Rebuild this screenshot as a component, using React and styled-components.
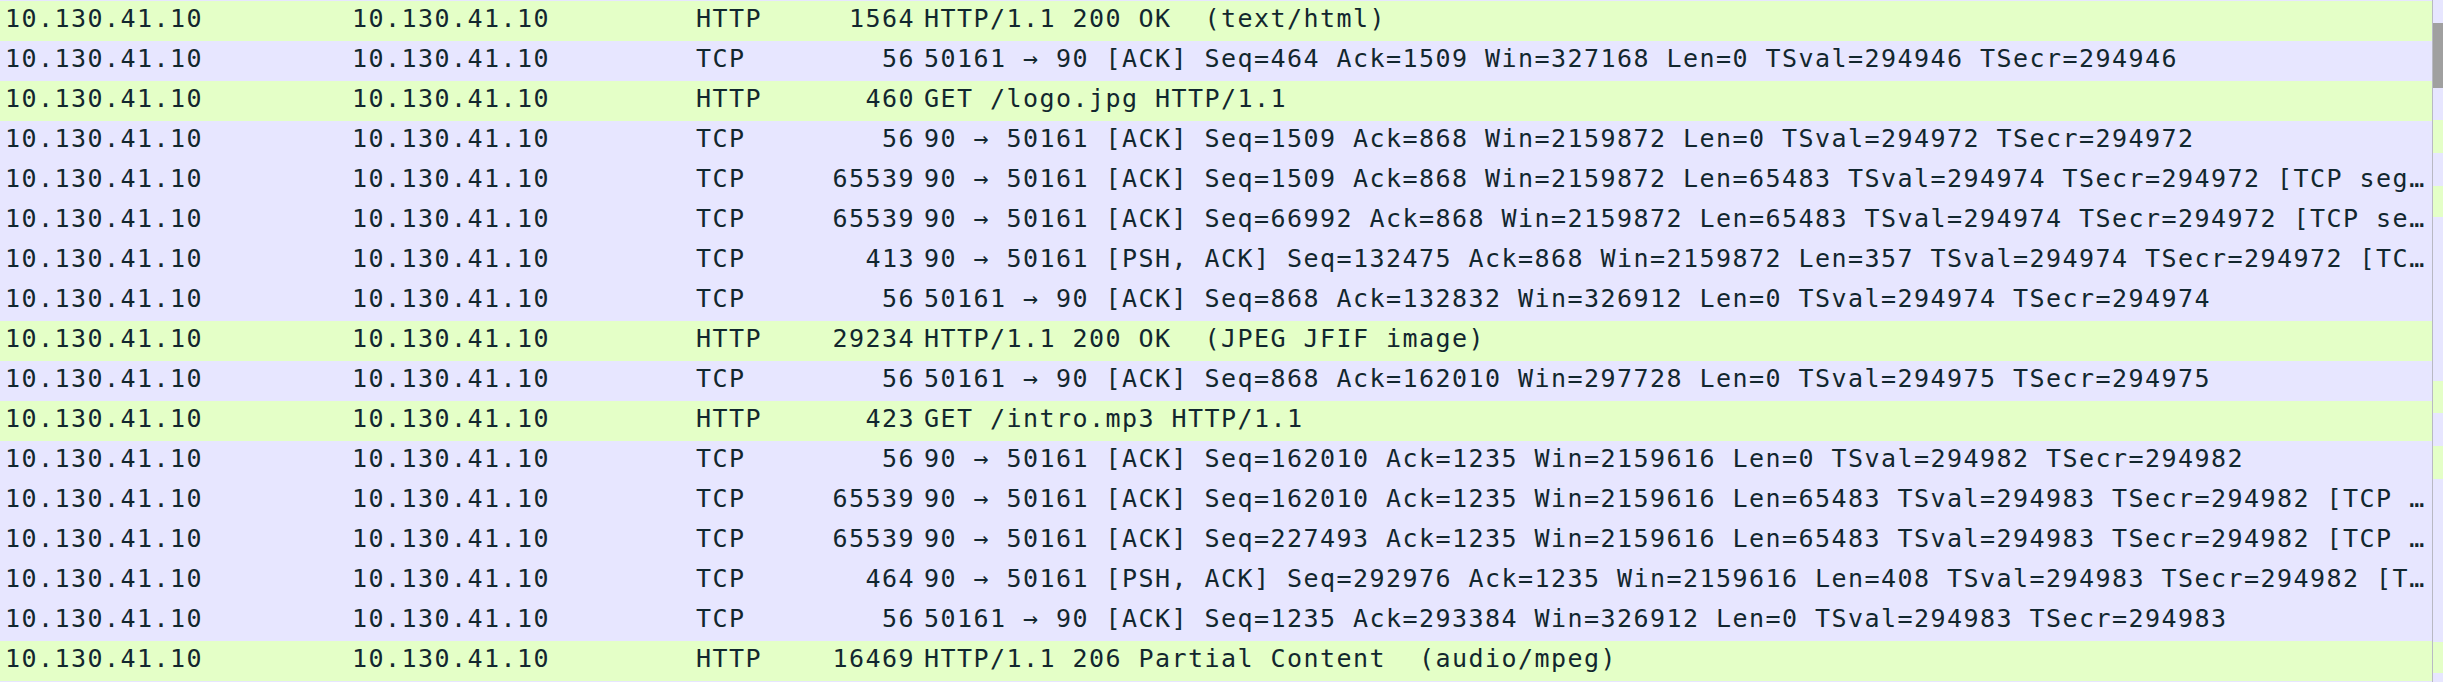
import React from "react";
import styled, { createGlobalStyle } from "styled-components";

const GlobalStyle = createGlobalStyle`
  html, body {
    margin: 0;
    padding: 0;
    background: #e7e6ff;
  }
  body {
    font-family: "DejaVu Sans Mono", "Liberation Mono", monospace;
  }
`;

const colors = {
  HTTP: "#e4ffc7",
  TCP: "#e7e6ff",
};

const packets = [
  ["HTTP", "1564", "HTTP/1.1 200 OK  (text/html)"],
  ["TCP", "56", "50161 → 90 [ACK] Seq=464 Ack=1509 Win=327168 Len=0 TSval=294946 TSecr=294946"],
  ["HTTP", "460", "GET /logo.jpg HTTP/1.1"],
  ["TCP", "56", "90 → 50161 [ACK] Seq=1509 Ack=868 Win=2159872 Len=0 TSval=294972 TSecr=294972"],
  ["TCP", "65539", "90 → 50161 [ACK] Seq=1509 Ack=868 Win=2159872 Len=65483 TSval=294974 TSecr=294972 [TCP segment of a reassembled PDU]"],
  ["TCP", "65539", "90 → 50161 [ACK] Seq=66992 Ack=868 Win=2159872 Len=65483 TSval=294974 TSecr=294972 [TCP segment of a reassembled PDU]"],
  ["TCP", "413", "90 → 50161 [PSH, ACK] Seq=132475 Ack=868 Win=2159872 Len=357 TSval=294974 TSecr=294972 [TCP segment of a reassembled PDU]"],
  ["TCP", "56", "50161 → 90 [ACK] Seq=868 Ack=132832 Win=326912 Len=0 TSval=294974 TSecr=294974"],
  ["HTTP", "29234", "HTTP/1.1 200 OK  (JPEG JFIF image)"],
  ["TCP", "56", "50161 → 90 [ACK] Seq=868 Ack=162010 Win=297728 Len=0 TSval=294975 TSecr=294975"],
  ["HTTP", "423", "GET /intro.mp3 HTTP/1.1"],
  ["TCP", "56", "90 → 50161 [ACK] Seq=162010 Ack=1235 Win=2159616 Len=0 TSval=294982 TSecr=294982"],
  ["TCP", "65539", "90 → 50161 [ACK] Seq=162010 Ack=1235 Win=2159616 Len=65483 TSval=294983 TSecr=294982 [TCP segment of a reassembled PDU]"],
  ["TCP", "65539", "90 → 50161 [ACK] Seq=227493 Ack=1235 Win=2159616 Len=65483 TSval=294983 TSecr=294982 [TCP segment of a reassembled PDU]"],
  ["TCP", "464", "90 → 50161 [PSH, ACK] Seq=292976 Ack=1235 Win=2159616 Len=408 TSval=294983 TSecr=294982 [TCP segment of a reassembled PDU]"],
  ["TCP", "56", "50161 → 90 [ACK] Seq=1235 Ack=293384 Win=326912 Len=0 TSval=294983 TSecr=294983"],
  ["HTTP", "16469", "HTTP/1.1 206 Partial Content  (audio/mpeg)"],
];

// minimap marks in the scrollbar (y, height)
const marks = [
  [120, 33],
  [186, 31],
  [381, 32],
  [446, 33],
  [642, 31],
];

const Frame = styled.div`
  display: flex;
  width: 2443px;
  height: 682px;
  overflow: hidden;
  background: #e7e6ff;
`;

const List = styled.div`
  flex: 1;
  display: flex;
  flex-direction: column;
  padding-top: 1px;
  border-right: 1px solid #b9b9c4;
  min-width: 0;
`;

const Row = styled.div`
  display: grid;
  grid-template-columns: 347px 344px 130px 98px 1fr;
  height: 40px;
  flex-shrink: 0;
  background: ${(p) => colors[p.$proto]};
  color: #12272e;
  font-size: 25px;
  letter-spacing: 1.45px;
  line-height: 35px;
  white-space: pre;
`;

const Cell = styled.div`
  padding: ${(p) => (p.$right ? "0 4px 5px 0" : "0 6px 5px 5px")};
  overflow: hidden;
  text-overflow: ellipsis;
  text-align: ${(p) => (p.$right ? "right" : "left")};
`;

const Scroll = styled.svg`
  display: block;
  flex-shrink: 0;
  width: 10px;
  height: 682px;
`;

export default function App() {
  return (
    <>
      <GlobalStyle />
      <Frame>
        <List>
          {packets.map(([proto, len, info], i) => (
            <Row key={i} $proto={proto}>
              <Cell>10.130.41.10</Cell>
              <Cell>10.130.41.10</Cell>
              <Cell>{proto}</Cell>
              <Cell $right>{len}</Cell>
              <Cell>{info}</Cell>
            </Row>
          ))}
        </List>
        <Scroll viewBox="0 0 10 682">
          <rect x="0" y="0" width="10" height="682" fill="#e7e6ff" />
          {marks.map(([y, h]) => (
            <rect key={y} x="0" y={y} width="10" height={h} fill="#e4ffc7" />
          ))}
          <rect x="0" y="23" width="10" height="65" fill="#a0a0a0" />
        </Scroll>
      </Frame>
    </>
  );
}
